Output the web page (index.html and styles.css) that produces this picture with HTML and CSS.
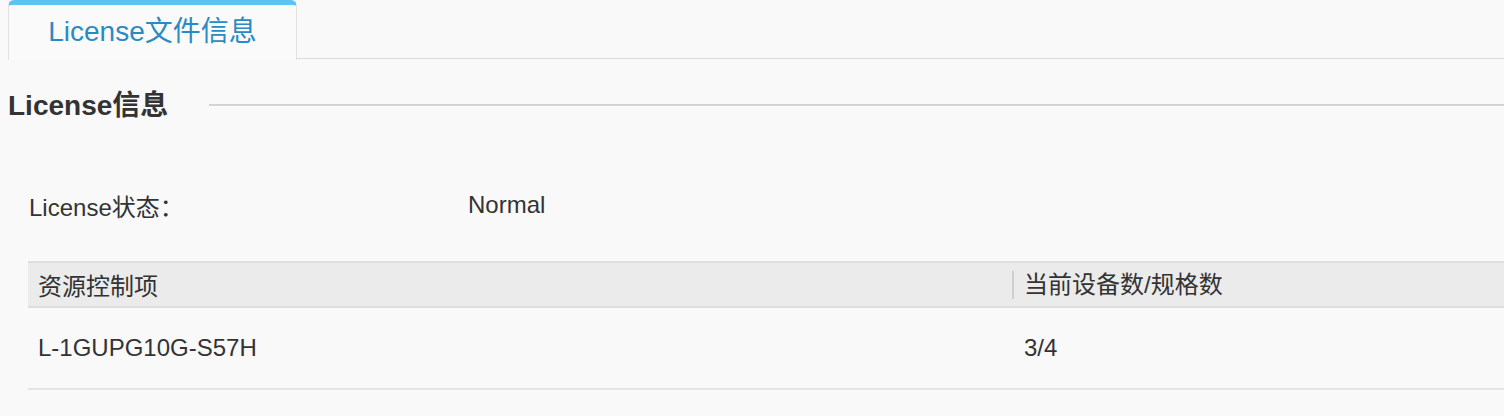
FILE: index.html
```html
<!DOCTYPE html>
<html lang="zh-CN">
<head>
<meta charset="utf-8">
<title>License文件信息</title>
<link rel="stylesheet" href="styles.css">
</head>
<body>
<div class="tabs">
  <div class="tab active">License文件信息</div>
  <div class="tab-rest"></div>
</div>
<div class="section-head">
  <h2 class="section-title">License信息</h2>
  <div class="section-rule"></div>
</div>
<div class="status-row">
  <span class="status-label">License状态：</span>
  <span class="status-value">Normal</span>
</div>
<div class="table">
  <div class="thead">
    <div class="th">资源控制项</div>
    <div class="th th-sep">当前设备数/规格数</div>
  </div>
  <div class="trow">
    <div class="td">L-1GUPG10G-S57H</div>
    <div class="td td-2">3/4</div>
  </div>
</div>
</body>
</html>
```

FILE: styles.css
```css
html, body {
  margin: 0;
  padding: 0;
  background: #f9f9f9;
  font-family: "Liberation Sans", Arial, "Noto Sans CJK SC", sans-serif;
  color: #333;
  overflow: hidden;
}

.tabs {
  display: flex;
  align-items: flex-end;
  padding-left: 8px;
  height: 60px;
}

.tab {
  width: 287px;
  height: 47px;
  box-sizing: content-box;
  border-top: 5px solid #5ec2f3;
  border-left: 1px solid #e2e2e2;
  border-right: 1px solid #e2e2e2;
  border-radius: 6px 6px 0 0;
  background: #fafafa;
  color: #2a8ac4;
  font-size: 28px;
  display: flex;
  align-items: center;
  justify-content: center;
  padding-bottom: 8px;
}

.tab-rest {
  flex: 1;
  border-bottom: 1px solid #dcdcdc;
  height: 0;
  margin-bottom: 1px;
}

.section-head {
  display: flex;
  align-items: center;
  padding-left: 8px;
  margin-top: 30px;
  height: 32px;
}

.section-title {
  margin: 0;
  font-size: 28px;
  font-weight: bold;
  color: #333;
  line-height: 32px;
}

.section-rule {
  flex: 1;
  margin-left: 41px;
  height: 0;
  border-top: 2px solid #d3d3d3;
  border-bottom: 1px solid #ffffff;
  margin-top: -2px;
}

.status-row {
  display: flex;
  align-items: center;
  padding-left: 29px;
  margin-top: 68px;
  height: 30px;
  font-size: 24px;
}

.status-label {
  width: 439px;
}

.table {
  margin-left: 28px;
  margin-top: 41px;
  font-size: 24px;
}

.thead {
  display: grid;
  grid-template-columns: 984px 1fr;
  background: #ebebeb;
  border-top: 2px solid #dedede;
  border-bottom: 2px solid #dedede;
  height: 43px;
  align-items: center;
}

.th {
  padding-left: 10px;
}

.th-sep {
  border-left: 2px solid #cfcfcf;
  padding-left: 10px;
  line-height: 28px;
}

.trow {
  display: grid;
  grid-template-columns: 984px 1fr;
  height: 80px;
  align-items: center;
  border-bottom: 2px solid #e4e4e4;
}

.td {
  padding-left: 10px;
}

.td-2 {
  padding-left: 12px;
}
```
